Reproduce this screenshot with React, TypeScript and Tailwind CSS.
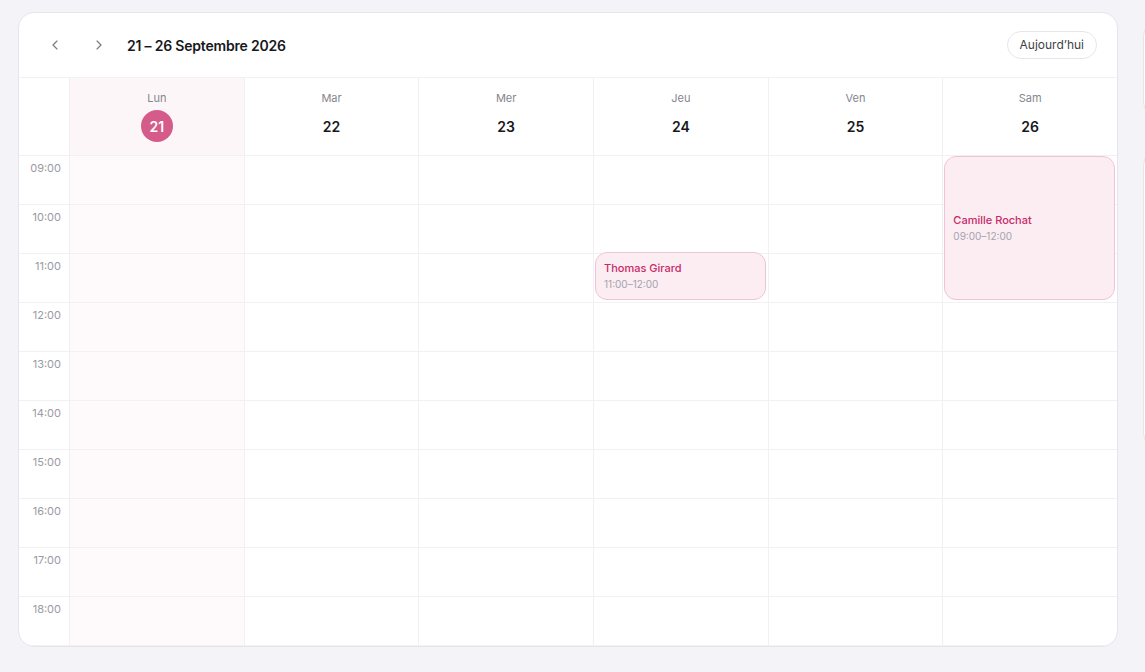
import { ChevronLeft, ChevronRight } from 'lucide-react'

const days = [
  { name: 'Lun', date: 21, today: true },
  { name: 'Mar', date: 22 },
  { name: 'Mer', date: 23 },
  { name: 'Jeu', date: 24 },
  { name: 'Ven', date: 25 },
  { name: 'Sam', date: 26 },
]

const hours = ['09:00', '10:00', '11:00', '12:00', '13:00', '14:00', '15:00', '16:00', '17:00', '18:00']

const events = [
  { day: 3, start: 2, len: 1, name: 'Thomas Girard', time: '11:00–12:00' },
  { day: 5, start: 0, len: 3, name: 'Camille Rochat', time: '09:00–12:00' },
]

// events are placed on a 48px hour scale
const HOUR = 48

function DayColumn({ index, today }: { index: number; today?: boolean }) {
  const dayEvents = events.filter((e) => e.day === index)
  return (
    <div className={`relative flex-1 border-l border-[#f1f0f4] ${today ? 'bg-[#fefafb]' : ''}`}>
      {hours.map((h) => (
        <div key={h} className="h-[49px] border-b border-[#f1f0f4]" />
      ))}
      {dayEvents.map((e) => (
        <div
          key={e.name}
          className="absolute left-[1px] right-[2px] flex flex-col justify-center rounded-[12px] border border-[#f2c3d4] bg-[#fbedf2] px-2"
          style={{ top: e.start * HOUR, height: e.len * HOUR }}
        >
          <div className="text-[11px] font-medium leading-4 text-[#c72a68]">{e.name}</div>
          <div className="text-[10px] leading-4 text-[#a3a3ad]">{e.time}</div>
        </div>
      ))}
    </div>
  )
}

export default function App() {
  return (
    <div
      className="flex h-[672px] w-[1145px] gap-[25px] overflow-hidden bg-[#f4f3f8] pl-[18px] pt-[12px]"
      style={{ fontFamily: 'Inter, "Noto Sans", sans-serif' }}
    >
      <div className="flex h-[635px] w-[1100px] shrink-0 flex-col overflow-hidden rounded-[16px] border border-[#e6e5ea] bg-white">
        <header className="flex h-[65px] shrink-0 items-center gap-3 border-b border-[#f1f0f4] px-5">
          <button className="flex h-8 w-8 items-center justify-center text-[#7a7a85]">
            <ChevronLeft size={16} strokeWidth={1.75} />
          </button>
          <button className="flex h-8 w-8 items-center justify-center text-[#7a7a85]">
            <ChevronRight size={16} strokeWidth={1.75} />
          </button>
          <h1 className="text-[14px] font-semibold tracking-[-0.2px] text-[#18181b]">21 – 26 Septembre 2026</h1>
          <div className="flex-1" />
          <button className="h-7 rounded-full border border-[#e6e5ea] px-3 text-[12px] text-[#3f3f46]">Aujourd’hui</button>
        </header>

        <div className="flex h-[78px] shrink-0 border-b border-[#f1f0f4]">
          <div className="w-[50px] shrink-0" />
          {days.map((d) => (
            <div
              key={d.name}
              className={`flex flex-1 flex-col items-center border-l border-[#f1f0f4] pt-[12px] ${d.today ? 'bg-[#fdf6f8]' : ''}`}
            >
              <div className="text-[11px] leading-4 text-[#85858f]">{d.name}</div>
              <div className="mt-[4px] flex h-8 w-8 items-center justify-center">
                {d.today ? (
                  <span className="flex h-8 w-8 items-center justify-center rounded-full bg-[#d45b8a] text-[14px] font-semibold text-white">
                    {d.date}
                  </span>
                ) : (
                  <span className="text-[14px] font-semibold text-[#18181b]">{d.date}</span>
                )}
              </div>
            </div>
          ))}
        </div>

        <div className="flex flex-1">
          <div className="w-[50px] shrink-0">
            {hours.map((h) => (
              <div key={h} className="h-[49px] border-b border-[#f1f0f4] pr-2 pt-1 text-right text-[11px] leading-4 text-[#9a9aa3]">
                {h}
              </div>
            ))}
          </div>
          {days.map((d, i) => (
            <DayColumn key={d.name} index={i} today={d.today} />
          ))}
        </div>
      </div>

      <div className="flex w-[300px] shrink-0 flex-col gap-[31px] pt-[8px]">
        <div className="h-[98px] rounded-[16px] border border-[#e6e5ea] bg-white" />
        <div className="h-[300px] rounded-[16px] border border-[#e6e5ea] bg-white" />
      </div>
    </div>
  )
}
